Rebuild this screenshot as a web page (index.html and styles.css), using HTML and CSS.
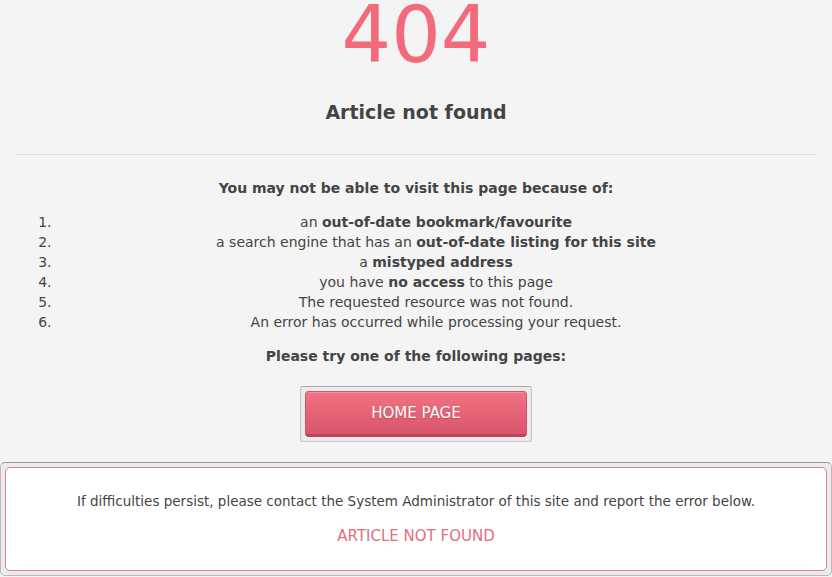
FILE: index.html
```html
<!DOCTYPE html>
<html>
<head>
<meta charset="utf-8">
<link rel="stylesheet" href="styles.css">
</head>
<body>
<div class="page">
  <div class="code">404</div>
  <h1 class="title">Article not found</h1>
  <hr class="rule">
  <p class="lead lead-first">You may not be able to visit this page because of:</p>
  <ol class="reasons">
    <li>an <b>out-of-date bookmark/favourite</b></li>
    <li>a search engine that has an <b>out-of-date listing for this site</b></li>
    <li>a <b>mistyped address</b></li>
    <li>you have <b>no access</b> to this page</li>
    <li>The requested resource was not found.</li>
    <li>An error has occurred while processing your request.</li>
  </ol>
  <p class="lead lead-second">Please try one of the following pages:</p>
  <div class="actions">
    <div class="btn-wrap">
      <a class="btn" href="#">HOME PAGE</a>
    </div>
  </div>
</div>
<div class="notice">
  <div class="notice-inner">
    <p class="notice-text">If difficulties persist, please contact the System Administrator of this site and report the error below.</p>
    <p class="notice-error">ARTICLE NOT FOUND</p>
  </div>
</div>
</body>
</html>
```
FILE: styles.css
```css
html, body {
  margin: 0;
  padding: 0;
  background: #f4f4f4;
}
body {
  font-family: "DejaVu Sans", Verdana, sans-serif;
  color: #444;
  font-size: 14px;
}
.page {
  width: 800px;
  margin: 0 auto;
  text-align: center;
}
.code {
  font-size: 78px;
  line-height: 70px;
  color: #f26b7b;
}
.title {
  font-size: 19px;
  font-weight: bold;
  margin: 27px 0 0;
  line-height: 30px;
  text-shadow: 0 1px 0 #fff;
}
.rule {
  border: 0;
  border-top: 1px solid #ddd;
  margin: 27px 0 0;
  height: 0;
}
.lead {
  font-weight: bold;
  font-size: 14px;
  line-height: 20px;
  margin: 0;
}
.lead-first {
  margin-top: 23px;
}
.lead-second {
  margin-top: 14px;
}
.reasons {
  margin: 14px 0 0;
  padding-left: 40px;
  line-height: 20px;
  font-size: 14px;
}
.actions {
  display: flex;
  justify-content: center;
  margin-top: 20px;
}
.btn-wrap {
  padding: 4px;
  border: 1px solid #c6c6c6;
  border-top-color: #a8a8a8;
  border-radius: 3px;
  background: #ebebeb;
}
.btn {
  display: block;
  box-sizing: border-box;
  width: 222px;
  height: 46px;
  line-height: 42px;
  border-radius: 4px;
  color: #fff;
  text-decoration: none;
  font-size: 15px;
  text-shadow: 0 1px 1px rgba(120, 30, 50, 0.35);
  background: linear-gradient(#f27282, #d8556b);
  border: 1px solid #d45469;
  border-bottom: 3px solid #b7455b;
  box-shadow: inset 0 1px 0 rgba(255, 255, 255, 0.25);
}
.notice {
  margin-top: 20px;
  padding: 4px;
  background: #ececec;
  border: 1px solid #bbb;
  border-top-color: #999;
  border-radius: 5px;
}
.notice-inner {
  background: #fff;
  border: 1px solid #d9838f;
  border-radius: 5px;
  text-align: center;
  padding: 25px 0 25px;
}
.notice-text {
  margin: 0;
  font-size: 13.5px;
  line-height: 16px;
}
.notice-error {
  margin: 18px 0 0;
  font-size: 15px;
  line-height: 18px;
  color: #e0707e;
}
```
